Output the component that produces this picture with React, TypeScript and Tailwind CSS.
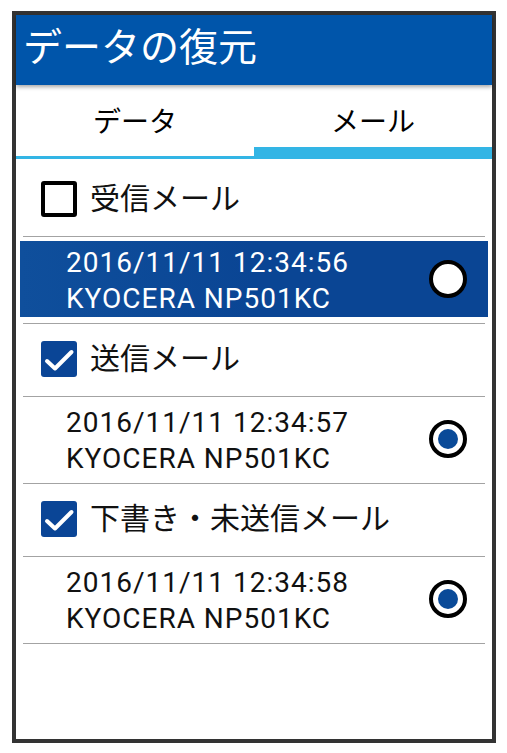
import React from 'react';

const FONT = "font-['Roboto','Noto_Sans_CJK_JP',sans-serif]";

type Entry = { label: string; checked: boolean; date: string; device: string; selected: boolean };

const ENTRIES: Entry[] = [
  { label: '受信メール', checked: false, date: '2016/11/11 12:34:56', device: 'KYOCERA NP501KC', selected: true },
  { label: '送信メール', checked: true, date: '2016/11/11 12:34:57', device: 'KYOCERA NP501KC', selected: false },
  { label: '下書き・未送信メール', checked: true, date: '2016/11/11 12:34:58', device: 'KYOCERA NP501KC', selected: false },
];

function Checkbox({ checked }: { checked: boolean }) {
  if (!checked) {
    return <div className="h-[36px] w-[36px] shrink-0 rounded-[3px] border-[4px] border-black bg-white" />;
  }
  return (
    <div className="flex h-[36px] w-[36px] shrink-0 items-center justify-center rounded-[3px] bg-[#0a4596]">
      <svg width="36" height="36" viewBox="0 0 36 36">
        <polyline points="6,20 14,27.5 30.5,11" fill="none" stroke="#fff" strokeWidth="4" strokeLinecap="round" strokeLinejoin="round" />
      </svg>
    </div>
  );
}

function Radio({ on }: { on: boolean }) {
  return (
    <div className="flex h-[38px] w-[38px] shrink-0 items-center justify-center rounded-full border-[4px] border-black bg-white">
      {on && <div className="h-[20px] w-[20px] rounded-full bg-[#0a4a98]" />}
    </div>
  );
}

const Divider = () => <div className="mx-[7px] h-px bg-[#a3a3a3]" />;

export default function App() {
  return (
    <div className={`h-[753px] w-[507px] bg-white pl-[12px] pt-[11px] ${FONT}`}>
      <div className="flex h-[732px] w-[484px] flex-col border-[4px] border-[#333333] bg-white">
        {/* title bar */}
        <div className="relative z-10 flex h-[70px] shrink-0 items-center bg-[#0055aa] pb-[4px] pl-[7px] shadow-[0_2px_4px_rgba(0,0,0,0.35)]">
          <span className="text-[39px] leading-none text-white">データの復元</span>
        </div>

        {/* tabs */}
        <div className="flex h-[74px] shrink-0">
          <div className="flex flex-1 flex-col">
            <div className="flex flex-1 items-center justify-center pt-[4px] text-[28px] text-black">データ</div>
            <div className="h-[3px] bg-[#33b5e5]" />
          </div>
          <div className="flex flex-1 flex-col">
            <div className="flex flex-1 items-center justify-center pt-[13px] text-[28px] text-black">メール</div>
            <div className="h-[12px] bg-[#33b5e5]" />
          </div>
        </div>

        {/* list */}
        {ENTRIES.map((e, i) => (
          <div key={e.label}>
            <div className={`flex items-center gap-[13px] pb-[19px] pl-[25px] ${i === 0 ? 'pt-[22px]' : 'pt-[17px]'}`}>
              <Checkbox checked={e.checked} />
              <span className="text-[30px] leading-none text-[#111]">{e.label}</span>
            </div>
            <Divider />
            <div className="px-[4px] pb-[6px] pt-[4px]">
              <div
                className={`flex h-[76px] items-center pl-[46px] pr-[21px] ${
                  e.selected ? 'bg-gradient-to-r from-[#0f4f9c] via-[#0a4594] to-[#0a4594] text-white' : 'text-[#111]'
                }`}
              >
                <div className="flex-1 pt-[4px] text-[28px] leading-[36px] tracking-[1px]">
                  <div>{e.date}</div>
                  <div>{e.device}</div>
                </div>
                <Radio on={!e.selected} />
              </div>
            </div>
            <Divider />
          </div>
        ))}
      </div>
    </div>
  );
}
